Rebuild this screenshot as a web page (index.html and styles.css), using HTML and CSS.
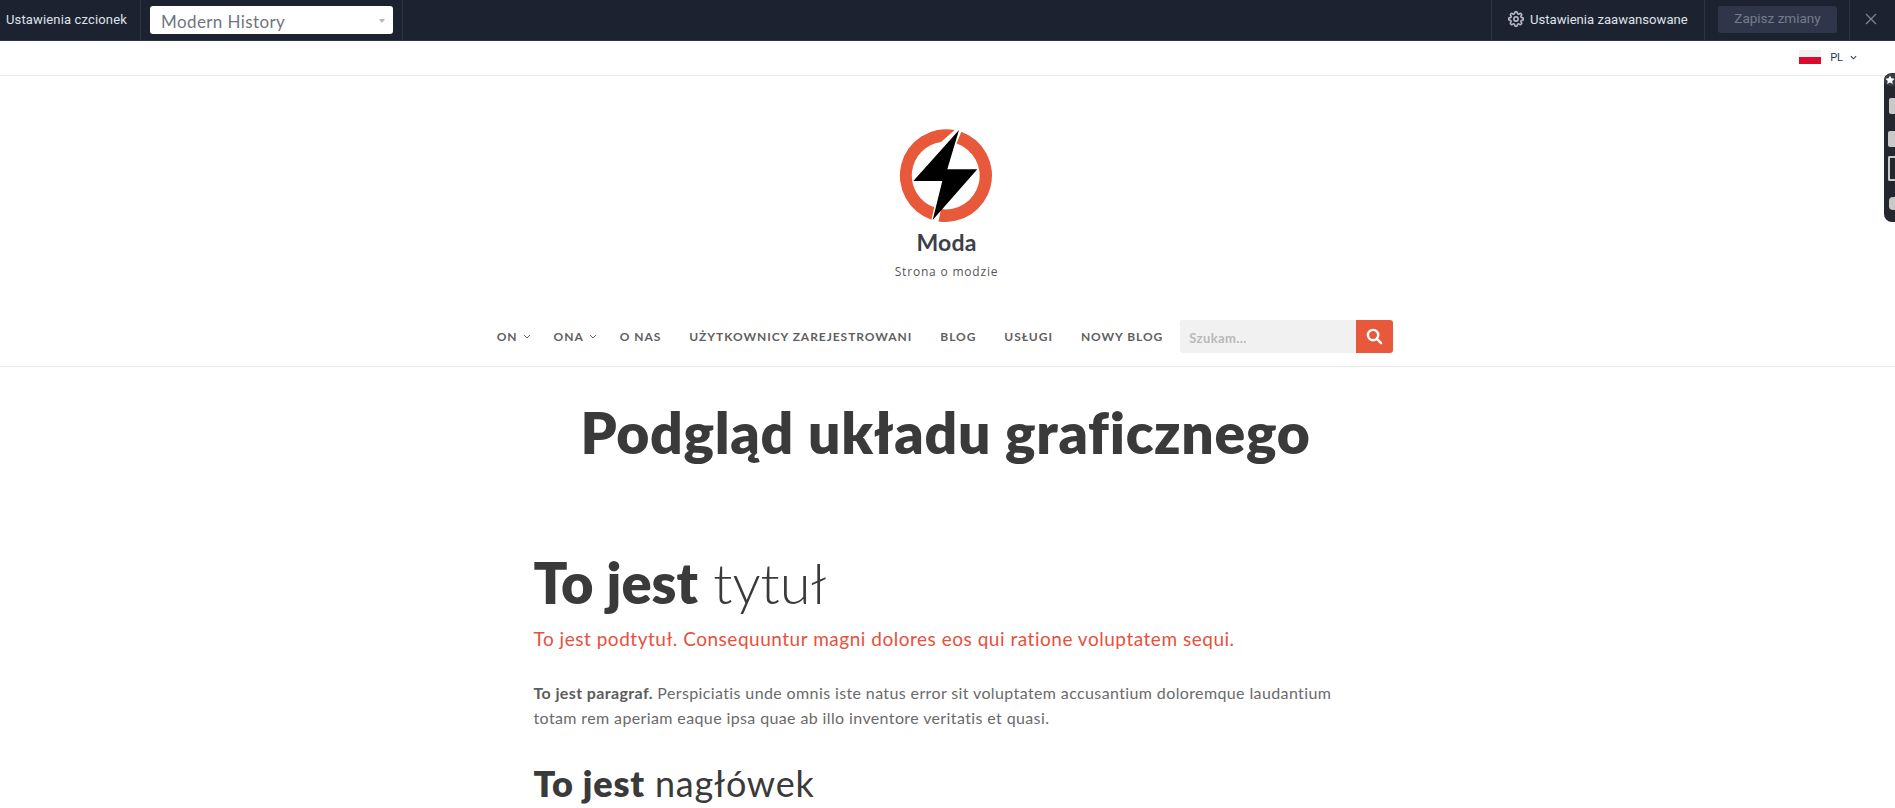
FILE: index.html
```html
<!DOCTYPE html>
<html lang="pl">
<head>
<meta charset="utf-8">
<title>Podgląd układu graficznego</title>
<link rel="stylesheet" href="styles.css">
</head>
<body>
<div class="topbar">
  <div class="tb-label">Ustawienia czcionek</div>
  <div class="tb-select-cell">
    <div class="tb-select"><span>Modern History</span><i class="caret"></i></div>
  </div>
  <div class="tb-spacer"></div>
  <div class="tb-adv">
    <svg class="gear" viewBox="0 0 24 24" width="16" height="16" fill="none" stroke="#b4b9c4" stroke-width="2.400"><circle cx="12" cy="12" r="3.200"/><path d="M19.400 15a1.700 1.700 0 0 0 .3 1.800l.1.1a2 2 0 1 1-2.900 2.900l-.1-.1a1.700 1.700 0 0 0-2.800 1.200V21a2 2 0 1 1-4 0v-.1a1.700 1.700 0 0 0-2.900-1.200l-.1.1a2 2 0 1 1-2.800-2.900l.1-.1a1.700 1.700 0 0 0-1.200-2.800H3a2 2 0 1 1 0-4h.1a1.700 1.700 0 0 0 1.200-2.900l-.1-.1a2 2 0 1 1 2.900-2.800l.1.1a1.700 1.700 0 0 0 1.800.3H9a1.700 1.700 0 0 0 1-1.500V3a2 2 0 1 1 4 0v.1a1.700 1.700 0 0 0 2.900 1.200l.1-.1a2 2 0 1 1 2.800 2.900l-.1.1a1.700 1.700 0 0 0-.3 1.800V9a1.700 1.700 0 0 0 1.500 1H21a2 2 0 1 1 0 4h-.1a1.700 1.700 0 0 0-1.500 1z"/></svg>
    <span>Ustawienia zaawansowane</span>
  </div>
  <div class="tb-save-cell"><div class="tb-save">Zapisz zmiany</div></div>
  <div class="tb-close">
    <svg viewBox="0 0 12 12" width="12" height="12" fill="none" stroke="#7d8494" stroke-width="1.300"><path d="M1 1l10 10M11 1L1 11"/></svg>
  </div>
</div>

<div class="langbar">
  <span class="flag"></span>
  <span class="lang">PL</span>
  <svg class="lang-chev" viewBox="0 0 8 5" width="7" height="5" fill="none" stroke="#2c3e50" stroke-width="1.200"><path d="M1 1l3 3 3-3"/></svg>
</div>

<header class="brand">
  <svg class="logo" viewBox="0 0 94 94" width="94" height="94">
    <path d="M62.300 2.700A46.500 46.500 0 0 1 39.500 92.400L42 80.100A33.800 33.800 0 0 0 57.600 14.600Z" fill="#e8583a"/>
    <path d="M55.700 .9A46.500 46.500 0 0 0 32.500 90.700L35.200 78.300A33.800 33.800 0 0 1 42 13Z" fill="#e8583a"/>
    <path d="M60 1L48.300 40.300H78.300L33.700 91L43.300 52H14.300Z" fill="#000"/>
  </svg>
  <div class="brand-name">Moda</div>
  <div class="brand-sub">Strona o modzie</div>
</header>

<nav class="nav">
  <a class="nav-item">ON<svg class="chev" viewBox="0 0 8 5" width="8" height="5" fill="none" stroke="#666" stroke-width="1"><path d="M1 1l3 3 3-3"/></svg></a>
  <a class="nav-item">ONA<svg class="chev" viewBox="0 0 8 5" width="8" height="5" fill="none" stroke="#666" stroke-width="1"><path d="M1 1l3 3 3-3"/></svg></a>
  <a class="nav-item">O NAS</a>
  <a class="nav-item">UŻYTKOWNICY ZAREJESTROWANI</a>
  <a class="nav-item">BLOG</a>
  <a class="nav-item">USŁUGI</a>
  <a class="nav-item nav-last">NOWY BLOG</a>
  <div class="search">
    <div class="search-input">Szukam...</div>
    <div class="search-btn">
      <svg viewBox="0 0 18 18" width="17" height="17" fill="none" stroke="#fff" stroke-width="2.600"><circle cx="7.500" cy="7.500" r="5.500"/><path d="M11.500 11.500L16 16" stroke-linecap="round"/></svg>
    </div>
  </div>
</nav>

<main class="main">
  <h1 class="page-title">Podgląd układu graficznego</h1>
  <article class="article">
    <h2 class="title"><strong>To jest</strong> tytuł</h2>
    <p class="subtitle">To jest podtytuł. Consequuntur magni dolores eos qui ratione voluptatem sequi.</p>
    <p class="para"><strong>To jest paragraf.</strong> Perspiciatis unde omnis iste natus error sit voluptatem accusantium doloremque laudantium totam rem aperiam eaque ipsa quae ab illo inventore veritatis et quasi.</p>
    <h3 class="heading"><strong>To jest</strong> nagłówek</h3>
  </article>
</main>

<aside class="dock">
  <span class="dock-cap"><svg viewBox="0 0 12 12" width="10" height="10"><path d="M6 .5l1.700 3.500 3.800.5-2.800 2.600.7 3.800L6 9l-3.400 1.900.7-3.800L.5 4.500l3.800-.5z" fill="#fff"/></svg></span>
  <span class="dock-sq dock-sq-a"></span>
  <span class="dock-sq dock-sq-b"></span>
  <span class="dock-copy"></span>
  <span class="dock-blob"></span>
</aside>
</body>
</html>
```
FILE: styles.css
```css
* { box-sizing: border-box; }
html, body { margin: 0; padding: 0; height: 808px; overflow: hidden; background: #fff; }
body { font-family: "Lato", "Open Sans", sans-serif; color: #3a3a3a; position: relative; }

.topbar { display: flex; height: 41px; background: #1c2230; border-bottom: 1px solid #2c3344; color: #dfe3ea; font-family: Roboto, sans-serif; font-size: 13px; }
.tb-label { width: 141px; padding: 12px 0 0 6px; border-right: 1px solid #2c3344; letter-spacing: .15px; }
.tb-select-cell { width: 262px; padding: 6px 0 0 9px; border-right: 1px solid #2c3344; }
.tb-select { width: 243px; height: 28px; background: #fff; border-radius: 3px; display: flex; align-items: center; justify-content: space-between; padding: 2px 8px 0 11px; color: #70757f; font-family: "Lato", sans-serif; font-size: 17px; letter-spacing: .4px; }
.caret { width: 0; height: 0; border: 3.500px solid transparent; border-top: 4px solid #b3b6bb; border-bottom: 0; }
.tb-spacer { flex: 1; }
.tb-adv { width: 214px; display: flex; align-items: center; gap: 6px; padding: 0 0 2px 16px; border-left: 1px solid #2c3344; border-right: 1px solid #2c3344; font-size: 13.100px; }
.tb-save-cell { width: 145px; padding: 6px 0 0 13px; border-right: 1px solid #2c3344; }
.tb-save { width: 119px; height: 27px; border-radius: 3px; background: #2f3649; color: #747b8d; font-size: 13.500px; text-align: center; line-height: 25px; }
.tb-close { flex: 0 0 45px; display: flex; align-items: center; justify-content: center; padding: 0 4px 2px 0; }

.langbar { height: 35px; border-bottom: 1px solid #e8e8e8; display: flex; align-items: center; justify-content: flex-end; padding: 0 38px 2px 0; }
.flag { width: 22px; height: 14px; background: linear-gradient(#f1f1f1 50%, #dc0a2f 50%); margin-right: 9px; }
.lang { font-family: Roboto, sans-serif; font-size: 11px; color: #1f3a52; margin-right: 7px; }
.lang-chev { display: block; }

.brand { display: flex; flex-direction: column; align-items: center; padding-top: 53px; height: 237px; }
.logo { display: block; margin-left: -3px; }
.brand-name { font-family: "Lato", sans-serif; font-weight: 700; font-size: 23px; line-height: 28px; margin: 5px 0 0 -2px; letter-spacing: .2px; color: #3b4048; }
.brand-sub { font-family: "Open Sans", sans-serif; font-size: 12px; line-height: 18px; margin: 7px 0 0 -2px; letter-spacing: .8px; color: #555; }

.nav { height: 54px; border-bottom: 1px solid #e8e8e8; display: flex; align-items: flex-start; justify-content: center; padding: 7px 5px 0 0; font-family: "Lato", sans-serif; font-size: 12px; font-weight: 700; color: #5f5f5f; letter-spacing: .95px; }
.nav-item { display: flex; align-items: center; height: 33px; margin-right: 28px; white-space: nowrap; }
.nav-item:nth-child(-n+2) { margin-right: 23px; }
.nav-item.nav-last { margin-right: 17px; }
.chev { margin-left: 5px; }
.search { display: flex; width: 213px; height: 33px; border-radius: 3px; overflow: hidden; }
.search-input { flex: 1; background: #f1f1f1; color: #b9b9b9; font-size: 13px; font-weight: 700; padding: 10px 0 0 9px; letter-spacing: .4px; }
.search-btn { width: 37px; background: #e8583a; display: flex; align-items: center; justify-content: center; }

.main { width: 828px; margin: 0 auto; }
.page-title { margin: 32px -100px 0 -104px; text-align: center; font-family: "Lato", sans-serif; font-weight: 800; font-size: 57px; line-height: 66px; color: #3a3a3a; letter-spacing: .72px; }
.article { padding-top: 85px; }
.title { margin: 0; font-family: "Lato", sans-serif; font-size: 56px; line-height: 66px; font-weight: 300; color: #3a3a3a; }
.title strong { font-weight: 800; }
.subtitle { margin: 10px 0 0; font-size: 19px; line-height: 26px; color: #e8503c; letter-spacing: .52px; }
.para { margin: 28px 0 0; font-size: 16px; line-height: 25px; color: #6a6a6a; letter-spacing: .38px; }
.para strong { font-weight: 700; color: #5c5c5c; }
.heading { margin: 31px 0 0; font-size: 36px; line-height: 44px; font-weight: 400; color: #3a3a3a; letter-spacing: .8px; }
.heading strong { font-weight: 800; }

.dock { position: absolute; right: 0; top: 73px; width: 11px; height: 149px; background: #24272e; border-radius: 8px 0 0 8px; display: flex; flex-direction: column; align-items: flex-end; }
.dock-cap { position: absolute; left: 0; top: 1px; width: 11px; height: 12px; background: #3a3d44; border-radius: 6px 0 0 6px; display: flex; align-items: center; justify-content: center; }
.dock-sq { display: block; width: 6px; height: 16px; background: #c9c9c9; border-radius: 2px 0 0 2px; }
.dock-sq-a { margin-top: 25px; }
.dock-sq-b { width: 7px; margin-top: 17px; }
.dock-copy { display: block; width: 7px; height: 25px; margin-top: 9px; border: 2px solid #c9c9c9; border-right: 0; border-radius: 2px 0 0 2px; }
.dock-blob { display: block; width: 6px; height: 13px; margin-top: 16px; background: #c9c9c9; border-radius: 4px 0 0 4px; }
```
